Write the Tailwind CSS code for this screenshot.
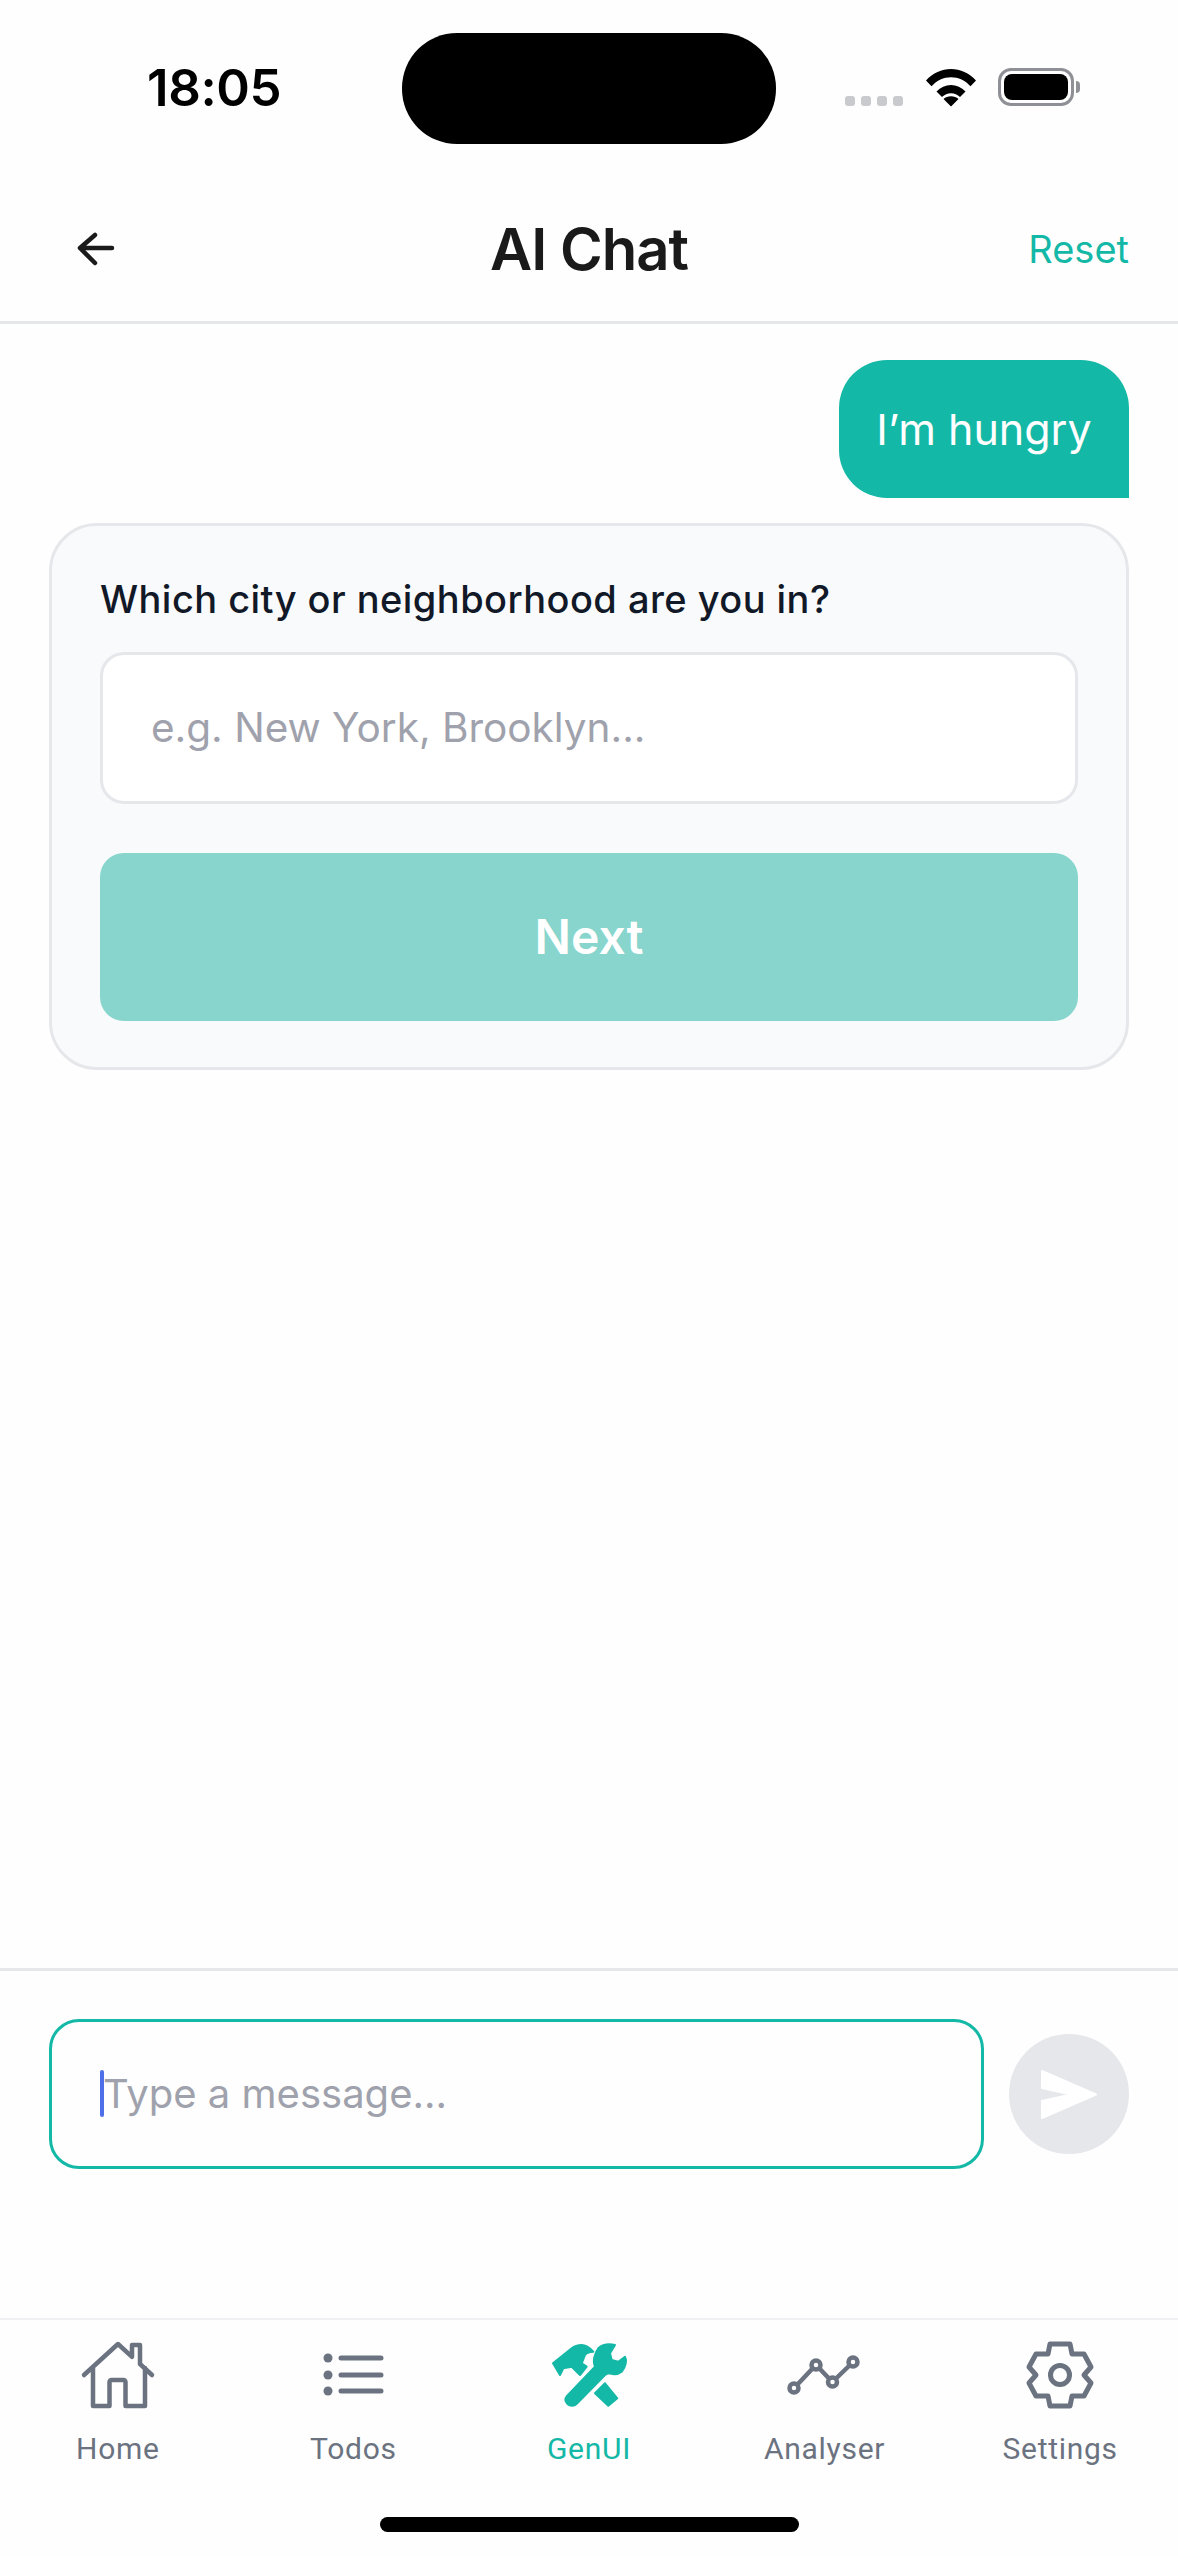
<!DOCTYPE html>
<html lang="en">
  <head>
    <meta charset="UTF-8" />
    <meta name="viewport" content="width=device-width, initial-scale=1.0" />
    <title>AI Chat</title>
    <script src="https://cdn.jsdelivr.net/npm/@tailwindcss/browser@4"></script>
  </head>
  <body class="bg-[#fefefe] text-gray-900 font-['Inter',sans-serif] overflow-hidden">
    <div class="w-[1178px] h-[2556px] flex flex-col relative">
      <!-- Status bar -->
      <div class="h-[175px] shrink-0 relative">
        <span class="absolute left-[147px] top-[60px] text-[51px] leading-[56px] font-semibold text-black tracking-[-0.4px]">18:05</span>
        <div class="absolute left-[402px] top-[33px] w-[374px] h-[111px] rounded-[55px] bg-black"></div>
        <div class="absolute left-[845px] top-[96px] flex gap-[6px]">
          <span class="w-[10px] h-[10px] rounded-[3px] bg-[#c9cacd]"></span>
          <span class="w-[10px] h-[10px] rounded-[3px] bg-[#c9cacd]"></span>
          <span class="w-[10px] h-[10px] rounded-[3px] bg-[#c9cacd]"></span>
          <span class="w-[10px] h-[10px] rounded-[3px] bg-[#c9cacd]"></span>
        </div>
        <svg class="absolute left-[925px] top-[67px]" width="52" height="40" viewBox="0 0 52 40">
          <path d="M1 13.5C8 6 16.500 2 26 2s18 4 25 11.500l-5.500 5.700C40 13.500 33.500 10.300 26 10.300S12 13.500 6.500 19.200Z M11.500 24.500C15.500 20.300 20.500 18 26 18s10.500 2.300 14.500 6.500l-5.500 5.600C32.500 27.500 29.500 26.200 26 26.200s-6.500 1.300-9 3.900Z M18.500 32C20.500 30.200 23 29.300 26 29.300s5.500 .9 7.500 2.700L26 39.500Z" fill="#000" />
        </svg>
        <div class="absolute left-[998px] top-[68px] w-[76px] h-[38px] rounded-[13px] border-[3px] border-[#8e9095] p-[3px]">
          <div class="w-full h-full rounded-[8px] bg-black"></div>
        </div>
        <div class="absolute left-[1076px] top-[81px] w-[4px] h-[12px] rounded-r-[4px] bg-[#8e9095]"></div>
      </div>

      <!-- Header -->
      <header class="h-[149px] shrink-0 border-b-[3px] border-[#e5e7eb] relative flex items-center justify-center">
        <svg class="absolute left-[76px] top-[56px]" width="40" height="36" viewBox="0 0 40 36" fill="none" stroke="#1a1a1a" stroke-width="4.500" stroke-linecap="round" stroke-linejoin="round">
          <path d="M36 17H4M19 4 4 17l15 15" />
        </svg>
        <h1 class="text-[58px] leading-[70px] font-semibold text-[#1a1a1a] tracking-[-1px] translate-y-[1px]">AI Chat</h1>
        <button class="absolute right-[49px] top-[51px] text-[38px] leading-[46px] text-[#14b8a6]">Reset</button>
      </header>

      <!-- Messages -->
      <main class="flex-1 px-[49px] pt-[36px] flex flex-col items-stretch">
        <div class="self-end h-[138px] w-[290px] rounded-[48px] rounded-br-none bg-[#14b8a6] flex items-center justify-center text-white text-[43px] leading-[50px]">I’m hungry</div>
        <section class="mt-[25px] h-[547px] rounded-[48px] border-[3px] border-[#e5e7eb] bg-[#f9fafb] px-[48px] pt-[48px]">
          <p class="text-[38px] leading-[50px] font-[450] tracking-[0.45px] text-[#111827]">Which city or neighborhood are you in?</p>
          <div class="mt-[28px] h-[152px] rounded-[24px] border-[3px] border-[#e5e7eb] bg-white flex items-center px-[48px] text-[40.5px] text-[#9fa2ac]">e.g. New York, Brooklyn...</div>
          <button class="mt-[49px] w-full h-[168px] rounded-[24px] bg-[#87d5cd] text-white text-[48px] font-semibold">Next</button>
        </section>
      </main>

      <!-- Composer -->
      <div class="h-[350px] shrink-0 border-t-[3px] border-[#e5e7eb] px-[49px] pt-[48px] flex items-start">
        <div class="w-[936px] h-[150px] rounded-[30px] border-[3px] border-[#14b8a6] flex items-center pl-[48px] relative">
          <span class="absolute left-[48px] top-[48px] w-[4px] h-[47px] rounded-full bg-[#4f6fe8]"></span>
          <span class="text-[40px] text-[#9fa2ac] pl-[3px]">Type a message...</span>
        </div>
        <div class="ml-[25px] mt-[15px] w-[120px] h-[120px] rounded-full bg-[#e5e7eb] flex items-center justify-center">
          <svg width="62" height="55" viewBox="0 0 62 55"><path d="M4 4 58 27.500 4 51V34L33 27.500 4 21Z" fill="#fff" stroke="#fff" stroke-width="2" stroke-linejoin="round" /></svg>
        </div>
      </div>

      <!-- Tab bar -->
      <nav class="h-[238px] shrink-0 border-t-[2px] border-[#f0f0f2] grid grid-cols-5 pt-[20px] font-['Roboto',sans-serif] text-[30px] leading-[36px] tracking-[0.7px] text-[#6b7280] relative">
        <div class="flex flex-col items-center">
          <svg width="76" height="70" viewBox="0 0 76 70" fill="none" stroke="#6b7280" stroke-width="4.500" stroke-linecap="round" stroke-linejoin="round"><path d="M4 35 38 4 52 16.800V5h8v19L72 35M13 28V66h16.500V42a2 2 0 0 1 2-2h12a2 2 0 0 1 2 2V66H65V28" /></svg>
          <span class="mt-[21px]">Home</span>
        </div>
        <div class="flex flex-col items-center">
          <svg width="76" height="70" viewBox="0 0 76 70" fill="none" stroke="#6b7280" stroke-width="5" stroke-linecap="round"><path d="M26 18h40M26 35h40M26 51h40" /><circle cx="13" cy="18" r="4.500" fill="#6b7280" stroke="none" /><circle cx="13" cy="35" r="4.500" fill="#6b7280" stroke="none" /><circle cx="13" cy="51" r="4.500" fill="#6b7280" stroke="none" /></svg>
          <span class="mt-[21px]">Todos</span>
        </div>
        <div class="flex flex-col items-center text-[#14b8a6]">
          <svg width="78" height="70" viewBox="0 0 78 70" fill="#14b8a6" stroke="#14b8a6" stroke-width="2" stroke-linejoin="round"><path d="M3 23.300 21.700 8.300C25 5.500 28 5 31.700 5 36 5 40 8 43.300 11.700 39 12 36 13 35 15L31.700 23.300 36.700 26.700 30 35 21.700 26.700 13.300 28.300 10 35Z" /><path d="M45 15C46 12 47 10 48.300 8.300 52 5 58 3.500 65 5L60 13.300 61.700 20 68.300 21.700 75 16.700C77 20 76 27 71.700 31.700 68 34.500 63 34.500 60 33.300 58 33.500 56 34 55 35L27 63.500C24 66.500 20 66.500 17.500 64 15 61.500 14.500 59 17 56L45 26.700C44 24 43 20 45 15Z" /><path d="M45 53.300 55 43.300 67.300 58.300 58.300 65.700Z" /></svg>
          <span class="mt-[21px]">GenUI</span>
        </div>
        <div class="flex flex-col items-center">
          <svg width="76" height="70" viewBox="0 0 76 70" fill="none" stroke="#6b7280" stroke-width="4.500"><path d="M10 45 26 28M32 28 42.500 39M48.500 39 63 25" /><circle cx="7" cy="48" r="4.500" /><circle cx="29" cy="25" r="4.500" /><circle cx="45.500" cy="42" r="4.500" /><circle cx="66" cy="22" r="4.500" /></svg>
          <span class="mt-[21px]">Analyser</span>
        </div>
        <div class="flex flex-col items-center">
          <svg width="70" height="70" viewBox="0 0 70 70" fill="none" stroke="#6b7280" stroke-width="5" stroke-linejoin="round"><path d="M25 4H45L47 14 59 14 66 27 59 35 66 43 59 56 47 56 45 66H25L23 56 11 56 4 43 11 35 4 27 11 14 23 14Z" /><circle cx="35" cy="35" r="9.500" /></svg>
          <span class="mt-[21px]">Settings</span>
        </div>
        <div class="absolute left-[380px] top-[197px] w-[419px] h-[15px] rounded-full bg-black"></div>
      </nav>
    </div>
  </body>
</html>
